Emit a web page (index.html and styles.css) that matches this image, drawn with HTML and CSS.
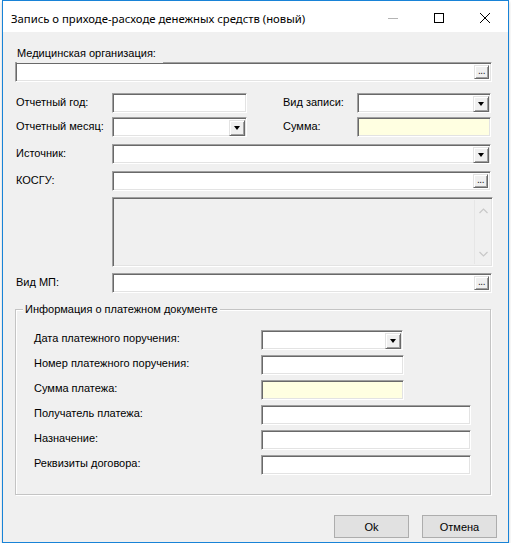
FILE: index.html
```html
<!DOCTYPE html>
<html lang="ru">
<head>
<meta charset="utf-8">
<title>Запись о приходе-расходе денежных средств (новый)</title>
<link rel="stylesheet" href="styles.css">
</head>
<body>
<div class="window">
  <div class="titlebar">
    <span class="title">Запись о приходе-расходе денежных средств (новый)</span>
    <div class="caption-buttons">
      <span class="cap-btn"><svg width="10" height="10" viewBox="0 0 10 10"><line x1="0" y1="5.5" x2="10" y2="5.5" stroke="#b4b4b4"/></svg></span>
      <span class="cap-btn"><svg width="10" height="10" viewBox="0 0 10 10"><rect x="0.5" y="0.5" width="9" height="9" fill="none" stroke="#000"/></svg></span>
      <span class="cap-btn"><svg width="10" height="10" viewBox="0 0 10 10"><path d="M0 0L10 10M10 0L0 10" stroke="#000" stroke-width="1"/></svg></span>
    </div>
  </div>

  <div class="client">
    <div class="mo-label">Медицинская организация:</div>
    <div class="tb picker mo-input"><span class="ell">...</span></div>

    <div class="row r1">
      <span class="lbl">Отчетный год:</span>
      <div class="tb"></div>
      <span></span>
      <span class="lbl">Вид записи:</span>
      <div class="tb combo"><span class="drop"><i class="tri"></i></span></div>
    </div>
    <div class="row r2">
      <span class="lbl">Отчетный месяц:</span>
      <div class="tb combo"><span class="drop"><i class="tri"></i></span></div>
      <span></span>
      <span class="lbl">Сумма:</span>
      <div class="tb yellow"></div>
    </div>
    <div class="row r3">
      <span class="lbl">Источник:</span>
      <div class="tb combo span4"><span class="drop"><i class="tri"></i></span></div>
    </div>
    <div class="row r4">
      <span class="lbl">КОСГУ:</span>
      <div class="tb picker span4"><span class="ell">...</span></div>
    </div>
    <div class="row r5">
      <span></span>
      <div class="tb memo span4">
        <div class="scroll">
          <svg width="9" height="6" viewBox="0 0 9 6"><path d="M0.5 5L4.5 1L8.5 5" fill="none" stroke="#c8c8c8" stroke-width="1.2"/></svg>
          <svg width="9" height="6" viewBox="0 0 9 6"><path d="M0.5 1L4.5 5L8.5 1" fill="none" stroke="#c8c8c8" stroke-width="1.2"/></svg>
        </div>
      </div>
    </div>
    <div class="row r6">
      <span class="lbl">Вид МП:</span>
      <div class="tb picker span4 mp"><span class="ell">...</span></div>
    </div>

    <div class="group">
      <span class="legend">Информация о платежном документе</span>
      <div class="grow">
        <span class="glbl">Дата платежного поручения:</span>
        <div class="tb combo w142"><span class="drop"><i class="tri"></i></span></div>
      </div>
      <div class="grow">
        <span class="glbl">Номер платежного поручения:</span>
        <div class="tb w143"></div>
      </div>
      <div class="grow">
        <span class="glbl">Сумма платежа:</span>
        <div class="tb yellow w143"></div>
      </div>
      <div class="grow">
        <span class="glbl">Получатель платежа:</span>
        <div class="tb w210"></div>
      </div>
      <div class="grow">
        <span class="glbl">Назначение:</span>
        <div class="tb w210"></div>
      </div>
      <div class="grow">
        <span class="glbl">Реквизиты договора:</span>
        <div class="tb w210"></div>
      </div>
    </div>

    <div class="buttons">
      <button class="btn" type="button">Ok</button>
      <button class="btn" type="button">Отмена</button>
    </div>
  </div>
</div>
</body>
</html>
```

FILE: styles.css
```css
html, body {
  margin: 0;
  padding: 0;
  background: #ffffff;
}

body {
  font-family: "Liberation Sans", Arial, sans-serif;
  font-size: 11px;
  color: #000;
}

.window {
  margin-left: 2px;
  width: 507px;
  height: 543px;
  box-sizing: border-box;
  border: 1px solid #1883d7;
  background: #f0f0f0;
  box-shadow: 0 2px 3px rgba(0, 0, 0, 0.22);
  display: flex;
  flex-direction: column;
}

.titlebar {
  height: 31px;
  box-sizing: border-box;
  padding-top: 3px;
  background: #ffffff;
  display: flex;
  align-items: stretch;
}

.title {
  flex: 1;
  padding-left: 8px;
  font-family: "Noto Sans", "Open Sans", sans-serif;
  font-size: 11.3px;
  display: flex;
  align-items: center;
  color: #000;
}

.caption-buttons {
  display: flex;
}

.cap-btn {
  width: 46px;
  display: flex;
  align-items: center;
  justify-content: center;
}

.cap-btn svg {
  display: block;
}

.client {
  flex: 1;
  padding-top: 15px;
}

/* sunken textbox */
.tb {
  box-sizing: border-box;
  height: 20px;
  background: #ffffff;
  border: 1px solid;
  border-color: #a0a0a0 #ffffff #ffffff #a0a0a0;
  box-shadow: inset 1px 1px 0 #696969, inset -1px -1px 0 #e3e3e3;
}

.yellow {
  background: #ffffe1;
}

.mo-label {
  position: relative;
  margin-left: 14px;
  width: 146px;
  height: 16px;
  line-height: 13px;
  background: #f0f0f0;
}

.mo-input {
  margin-left: 12px;
  margin-top: -1px;
  width: 477px;
}

.picker, .combo {
  display: flex;
  justify-content: flex-end;
  padding: 2px 2px 2px 2px;
}

.ell {
  box-sizing: border-box;
  width: 15px;
  height: 14px;
  background: #f0f0f0;
  border: 1px solid;
  border-color: #e3e3e3 #696969 #696969 #e3e3e3;
  box-shadow: inset 1px 1px 0 #ffffff, inset -1px -1px 0 #a0a0a0;
  font-size: 10px;
  line-height: 10px;
  text-align: center;
  letter-spacing: -0.5px;
  color: #1a1a1a;
  overflow: hidden;
}

.drop {
  box-sizing: border-box;
  width: 16px;
  height: 16px;
  background: #f0f0f0;
  border: 1px solid;
  border-color: #e3e3e3 #696969 #696969 #e3e3e3;
  box-shadow: inset 1px 1px 0 #ffffff, inset -1px -1px 0 #a0a0a0;
  display: flex;
  align-items: center;
  justify-content: center;
  margin-right: -1px;
}

.tri {
  display: block;
  width: 0;
  height: 0;
  border-left: 3.5px solid transparent;
  border-right: 3.5px solid transparent;
  border-top: 4px solid #000;
}

.row {
  display: grid;
  grid-template-columns: 96px 135px 35px 75px 134px;
  align-items: start;
  padding-left: 13px;
}

.r1 { margin-top: 11px; }
.r2 { margin-top: 4px; }
.r3 { margin-top: 7px; }
.r4 { margin-top: 7px; }
.r5 { margin-top: 6px; }
.r6 { margin-top: 6px; }

.lbl {
  line-height: 13px;
  padding-top: 3px;
  white-space: nowrap;
}

.row .lbl:nth-child(4) {
  padding-left: 1px;
}

.span4 {
  grid-column: 2 / span 4;
}

.mp {
  width: 380px;
}

.memo {
  width: 381px;
  height: 70px;
  background: #f0f0f0;
  display: flex;
  justify-content: flex-end;
  padding: 2px 1px 2px 2px;
}

.scroll {
  width: 16px;
  border-left: 1px solid #e6e6e6;
  display: flex;
  flex-direction: column;
  align-items: center;
  justify-content: space-between;
  padding: 8px 0 7px 0;
}

.scroll svg {
  display: block;
}

.group {
  position: relative;
  margin: 16px 0 0 12px;
  width: 476px;
  box-sizing: border-box;
  border: 1px solid #c4c4c4;
  box-shadow: inset 1px 1px 0 #ffffff, 1px 1px 0 #ffffff;
  padding: 20px 0 19px 18px;
  display: flex;
  flex-direction: column;
  gap: 5px;
}

.legend {
  position: absolute;
  top: -7px;
  left: 7px;
  padding: 0 2px 0 2px;
  line-height: 13px;
  background: #f0f0f0;
  white-space: nowrap;
}

.grow {
  display: grid;
  grid-template-columns: 227px auto;
  align-items: start;
}

.glbl {
  line-height: 13px;
  padding-top: 2px;
  white-space: nowrap;
}

.w142 { width: 142px; }
.w143 { width: 143px; }
.w210 { width: 210px; }

.buttons {
  display: flex;
  justify-content: flex-end;
  gap: 13px;
  margin-top: 20px;
  padding-right: 11px;
}

.btn {
  box-sizing: border-box;
  width: 75px;
  height: 23px;
  margin: 0;
  padding: 0;
  background: #e1e1e1;
  border: 1px solid #adadad;
  border-radius: 0;
  font-family: "Liberation Sans", Arial, sans-serif;
  font-size: 11px;
  color: #000;
}
```
